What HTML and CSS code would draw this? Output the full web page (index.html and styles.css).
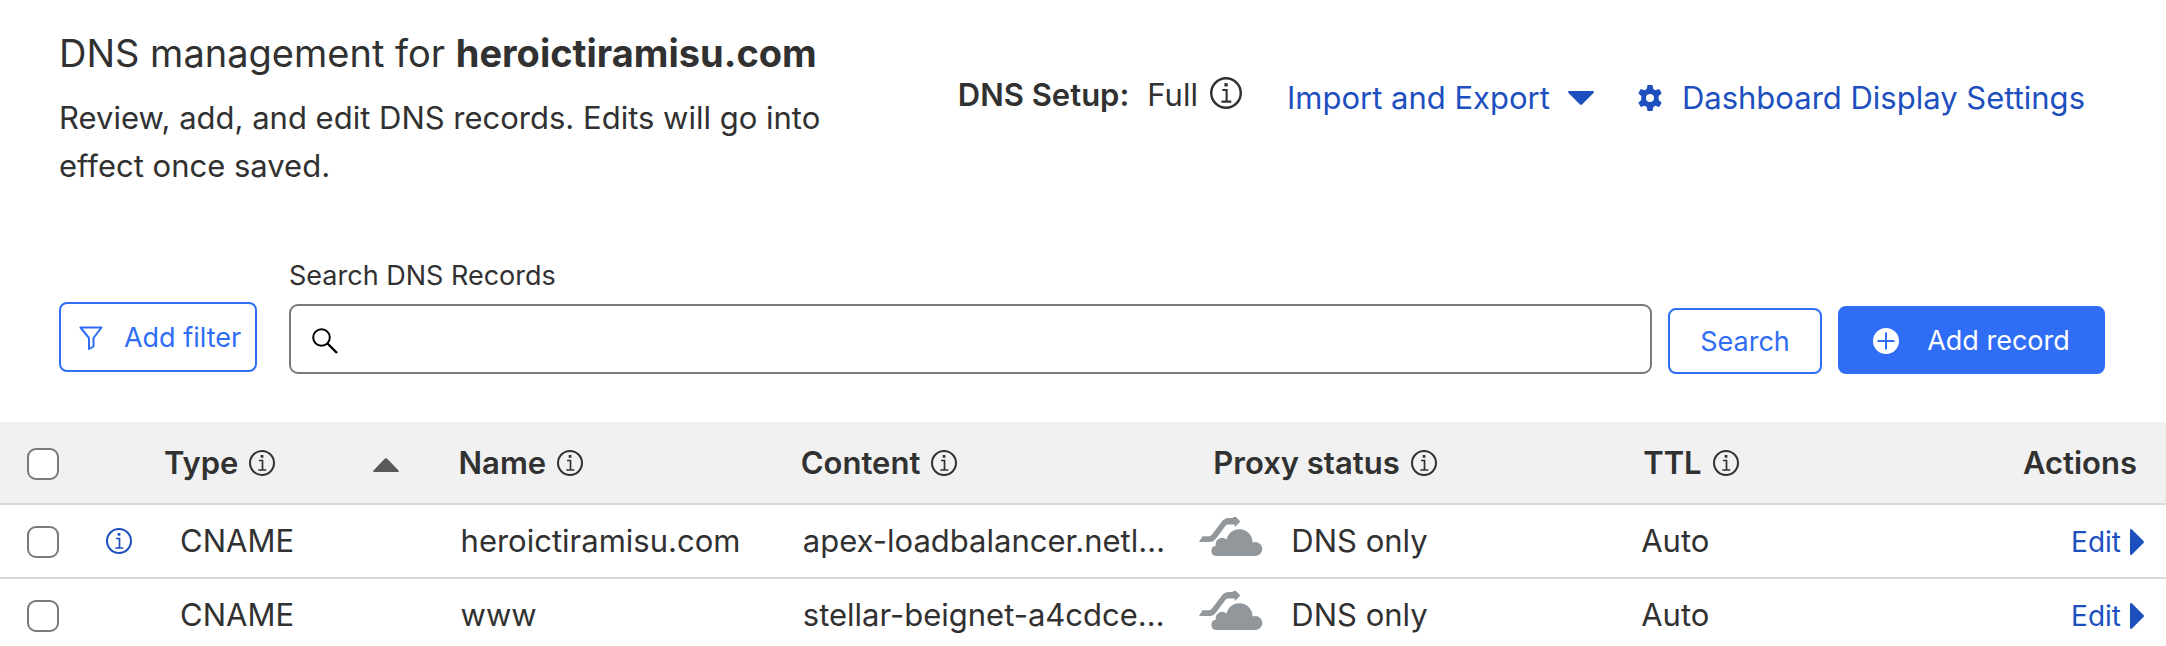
FILE: index.html
```html
<!DOCTYPE html>
<html lang="en">
<head>
<meta charset="utf-8">
<meta name="viewport" content="width=device-width, initial-scale=1">
<title>DNS management</title>
<link rel="stylesheet" href="styles.css">
</head>
<body>
<svg class="sprite" aria-hidden="true">
  <symbol id="info" viewBox="0 0 26 26">
    <circle cx="13" cy="13" r="12" fill="none" stroke="currentColor" stroke-width="2"/>
    <path d="M10 10.5h3.5V20M9.3 20h8" fill="none" stroke="currentColor" stroke-width="1.7"/>
    <rect x="11.7" y="5" width="2.7" height="2.7" fill="currentColor"/>
  </symbol>
  <symbol id="dns-only" viewBox="0 0 64 40">
    <path d="M0 25l3.500-5.700H9c2 0 3-.6 4-1.900L22.500 5c2.200-2.900 4-4 7.500-4h4V0h3l4.300 4.500L36 10l-.5-2.600h-6c-1.500 0-2.300.5-3.300 1.800L17 21.500C15 24 13.700 25 10.500 25z" fill="currentColor"/>
    <path d="M17 39a5.200 5.200 0 0 1-.2-10.300A6.600 6.600 0 0 1 27.600 22.500 13.100 13.100 0 0 1 53.500 25.600 7 7 0 1 1 57 39z" fill="currentColor"/>
  </symbol>
</svg>

<header class="page-head">
  <div class="intro">
    <h1 class="title">DNS management for <strong>heroictiramisu.com</strong></h1>
    <p class="lead">Review, add, and edit DNS records. Edits will go into effect once saved.</p>
  </div>
  <div class="tools">
    <div class="setup"><strong>DNS Setup:</strong><span>Full</span><svg class="icon-info large"><use href="#info"/></svg></div>
    <button class="link-btn export" type="button">Import and Export
      <svg class="caret" viewBox="0 0 26 14"><path d="M1 0h24q1.500 .5.500 2L14 13.500q-1 .8-2 0L.5 2Q-.5.500 1 0z" fill="currentColor"/></svg>
    </button>
    <button class="link-btn" type="button">
      <svg class="gear" viewBox="0 0 24 26"><path fill="currentColor" fill-rule="evenodd" d="M9.500 0h5l.8 4 2 1.200 3.900-1.300L23.700 8.200l-3 2.700v4.200l3 2.700-2.500 4.300-3.900-1.300-2 1.200-.8 4h-5l-.8-4-2-1.200-3.900 1.300L.3 17.800l3-2.700v-4.200l-3-2.700 2.500-4.300 3.900 1.300 2-1.200zM12 9a4 4 0 1 0 0 8 4 4 0 0 0 0-8z"/></svg>
      Dashboard Display Settings
    </button>
  </div>
</header>

<form class="search-bar" onsubmit="return false">
  <button class="btn outline filter" type="button">
    <svg class="funnel" viewBox="0 0 24 24"><path d="M1.500 1.500h21L14.500 12v8.500L10 23V12z" fill="none" stroke="currentColor" stroke-width="2" stroke-linejoin="round"/></svg>
    Add filter
  </button>
  <div class="field">
    <label for="q">Search DNS Records</label>
    <div class="box">
      <svg class="lens" viewBox="0 0 26 26"><circle cx="9.500" cy="9.500" r="8.300" fill="none" stroke="currentColor" stroke-width="2"/><path d="M15.500 15.500L25 25" stroke="currentColor" stroke-width="2.400"/></svg>
      <input id="q" type="text">
    </div>
  </div>
  <button class="btn outline search" type="submit">Search</button>
  <button class="btn solid" type="button">
    <svg class="plus" viewBox="0 0 26 26"><circle cx="13" cy="13" r="13" fill="currentColor"/><path d="M13 4.500v17M4.500 13h17" class="plus-mark"/></svg>
    Add record
  </button>
</form>

<table class="records">
  <colgroup>
    <col class="c-check"><col class="c-note"><col class="c-type"><col class="c-name"><col class="c-content"><col class="c-proxy"><col class="c-ttl"><col class="c-actions">
  </colgroup>
  <thead>
    <tr>
      <th class="check"><input type="checkbox" aria-label="Select all records"></th>
      <th></th>
      <th class="type"><div class="head"><span>Type</span><svg class="icon-info"><use href="#info"/></svg><svg class="sort" viewBox="0 0 26 14"><path d="M1 14h24q1.500-.5.500-1.500L14 .6q-1-.9-2 0L.5 12.500Q-.5 13.500 1 14z" fill="currentColor"/></svg></div></th>
      <th><div class="head"><span>Name</span><svg class="icon-info"><use href="#info"/></svg></div></th>
      <th><div class="head"><span>Content</span><svg class="icon-info"><use href="#info"/></svg></div></th>
      <th class="proxy"><div class="head"><span>Proxy status</span><svg class="icon-info"><use href="#info"/></svg></div></th>
      <th class="ttl"><div class="head"><span>TTL</span><svg class="icon-info"><use href="#info"/></svg></div></th>
      <th class="actions">Actions</th>
    </tr>
  </thead>
  <tbody>
    <tr>
      <td class="check"><input type="checkbox" aria-label="Select heroictiramisu.com"></td>
      <td class="note"><svg class="icon-info"><use href="#info"/></svg></td>
      <td class="type">CNAME</td>
      <td class="text">heroictiramisu.com</td>
      <td class="text">apex-loadbalancer.netl…</td>
      <td class="proxy"><div class="status"><svg class="cloud"><use href="#dns-only"/></svg>DNS only</div></td>
      <td class="ttl">Auto</td>
      <td class="actions"><button class="edit" type="button">Edit<svg class="next" viewBox="0 0 14 26"><path d="M0 1q.5-1.500 2-.5l11.500 11.500q.8 1 0 2L2 25.500q-1.500 1-2-.5z" fill="currentColor"/></svg></button></td>
    </tr>
    <tr>
      <td class="check"><input type="checkbox" aria-label="Select www"></td>
      <td class="note"></td>
      <td class="type">CNAME</td>
      <td class="text">www</td>
      <td class="text">stellar-beignet-a4cdce…</td>
      <td class="proxy"><div class="status"><svg class="cloud"><use href="#dns-only"/></svg>DNS only</div></td>
      <td class="ttl">Auto</td>
      <td class="actions"><button class="edit" type="button">Edit<svg class="next" viewBox="0 0 14 26"><path d="M0 1q.5-1.500 2-.5l11.500 11.500q.8 1 0 2L2 25.500q-1.500 1-2-.5z" fill="currentColor"/></svg></button></td>
    </tr>
  </tbody>
</table>
</body>
</html>
```
FILE: styles.css
```css
* { box-sizing: border-box; }

html { scrollbar-width: none; }

body {
  margin: 0;
  background: #fff;
  color: #313131;
  font-family: Inter, "Liberation Sans", sans-serif;
  font-size: 31px;
  line-height: 48px;
}

button, input {
  font: inherit;
  color: inherit;
  margin: 0;
}

button {
  display: inline-flex;
  align-items: center;
  padding: 0;
  border: 0;
  background: none;
  white-space: nowrap;
  cursor: pointer;
}

svg { flex: none; display: block; }
.sprite { position: absolute; width: 0; height: 0; }
strong, th { font-weight: 600; }

/* Page header */
.page-head {
  display: flex;
  align-items: flex-start;
  justify-content: space-between;
  padding: 28px 81px 0 59px;
}
.intro { width: 780px; }
.title {
  margin: 0;
  font-size: 38px;
  line-height: 50px;
  font-weight: 400;
  white-space: nowrap;
}
.title strong { font-weight: 700; }
.lead { margin: 16px 0 0; }
.tools {
  display: flex;
  align-items: flex-start;
  padding-top: 46px;
  white-space: nowrap;
}
.setup {
  display: flex;
  align-items: center;
  margin: -3px 45px 0 0;
}
.setup span { margin: 0 12px 0 18px; }
.setup svg { margin-top: -4px; }
.link-btn { color: #1d4fbf; }
.export { margin-right: 44px; }
.caret { width: 26px; height: 14px; margin-left: 18px; }
.gear { width: 24px; height: 26px; margin-right: 20px; }

.icon-info { width: 26px; height: 26px; }
.icon-info.large { width: 32px; height: 32px; }

/* Search bar */
.search-bar {
  display: flex;
  align-items: flex-end;
  padding: 68px 61px 0 59px;
  font-size: 27px;
  line-height: 36px;
}
.btn {
  justify-content: center;
  padding-top: 2px;
  border: 2px solid #2f6df6;
  border-radius: 8px;
  height: 68px;
}
.outline { color: #2f6df6; background: #fff; }
.filter { width: 198px; height: 70px; margin: 0 32px 2px 0; padding-left: 4px; }
.funnel { width: 24px; height: 24px; margin-right: 21px; }
.field { flex: 1; min-width: 0; }
.field label { display: block; margin-bottom: 10px; }
.box {
  display: flex;
  align-items: center;
  gap: 16px;
  height: 70px;
  padding: 0 21px;
  border: 2px solid #797979;
  border-radius: 9px;
  color: #000;
}
.box input { flex: 1; min-width: 0; border: 0; outline: 0; background: none; }
.lens { width: 26px; height: 26px; margin-top: 4px; }
.search { width: 154px; height: 66px; margin: 0 16px; }
.solid { width: 267px; background: #2f6df6; color: #fff; }
.plus { width: 26px; height: 26px; margin-right: 28px; }
.plus-mark { stroke: #2f6df6; stroke-width: 2; }

/* Records table */
.records {
  width: 100%;
  margin-top: 48px;
  border-collapse: collapse;
  table-layout: fixed;
}
.c-check { width: 106px; }
.c-note { width: 58px; }
.c-type { width: 13.6%; }
.c-name { width: 15.8%; }
.c-content { width: 18.4%; }
.c-proxy { width: 20.4%; }
.c-ttl { width: 10%; }

th, td {
  padding: 0;
  height: 74px;
  border-bottom: 2px solid #d9d9d9;
  text-align: left;
  white-space: nowrap;
}
th { height: 82px; background: #f1f1f1; }
.head { display: flex; align-items: center; gap: 11px; }
.sort { width: 26px; height: 14px; margin: 4px 60px 0 auto; color: #595959; }
.check { padding-left: 27px; }
.check input {
  display: block;
  appearance: none;
  width: 32px;
  height: 32px;
  margin-top: 2px;
  border: 2px solid #797979;
  border-radius: 9px;
  background: #fff;
}
.note { color: #1d4fbf; }
td.type { padding-left: 16px; }
td.text { padding-left: 2px; }
th.proxy { padding-left: 14px; }
th.ttl { padding-left: 2px; }
.status { display: flex; align-items: center; gap: 28px; }
.cloud { width: 64px; height: 40px; margin-top: -8px; color: #92979b; }
.actions { text-align: right; }
th.actions { padding-right: 29px; }
td.actions { padding-right: 22px; }
.edit { gap: 9px; color: #1d4fbf; font-size: 28px; vertical-align: middle; }
.next { width: 14px; height: 26px; }
```
